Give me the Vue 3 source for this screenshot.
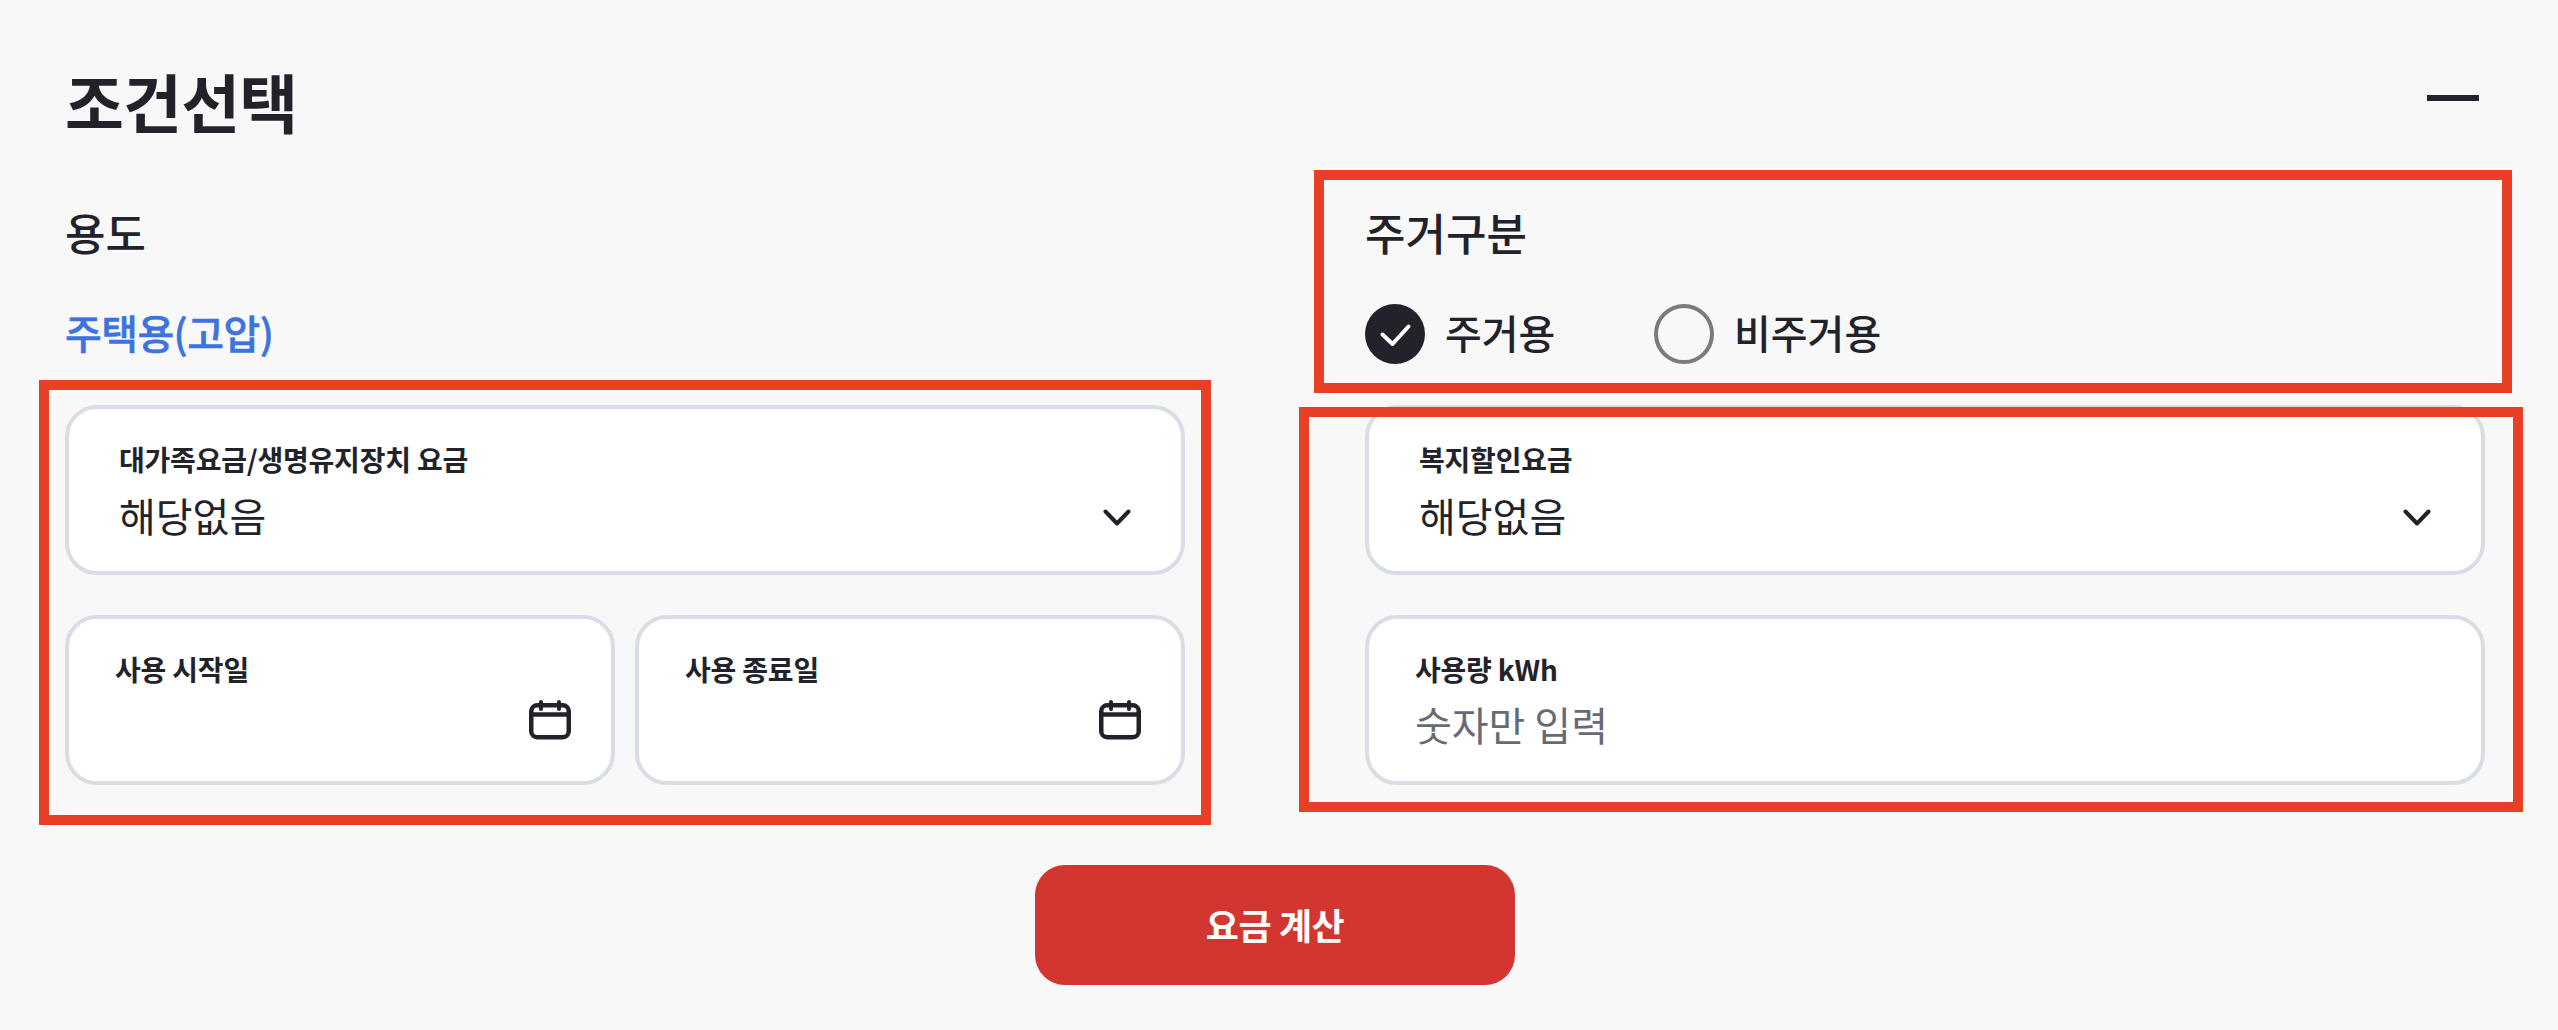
<script setup>
const selects = { family: '대가족요금/생명유지장치 요금', welfare: '복지할인요금' }
</script>

<template>
  <div class="page">
    <header class="head">
      <h1 class="title">조건선택</h1>
      <span class="minus"></span>
    </header>

    <div class="cols">
      <section class="col">
        <h2 class="sub">용도</h2>
        <div class="usage">주택용(고압)</div>
        <div class="card select">
          <label class="lbl">{{ selects.family }}</label>
          <div class="row">
            <span class="val">해당없음</span>
            <svg class="chev" width="28" height="17" viewBox="0 0 28 17"><path d="M2.5 2.5 14 14.5 25.5 2.5" fill="none" stroke="#22232a" stroke-width="4" stroke-linecap="round" stroke-linejoin="round"/></svg>
          </div>
        </div>
        <div class="dates">
          <div class="card date">
            <label class="lbl">사용 시작일</label>
            <div class="cal-row">
              <svg class="cal" width="42" height="42" viewBox="0 0 42 42"><g fill="none" stroke="#22232a" stroke-width="4.5"><rect x="2.25" y="6.25" width="37.5" height="32" rx="6"/><path d="M2.25 15.5h37.5"/><path d="M12 3v7M30 3v7" stroke-width="4" stroke-linecap="round"/></g></svg>
            </div>
          </div>
          <div class="card date">
            <label class="lbl">사용 종료일</label>
            <div class="cal-row">
              <svg class="cal" width="42" height="42" viewBox="0 0 42 42"><g fill="none" stroke="#22232a" stroke-width="4.5"><rect x="2.25" y="6.25" width="37.5" height="32" rx="6"/><path d="M2.25 15.5h37.5"/><path d="M12 3v7M30 3v7" stroke-width="4" stroke-linecap="round"/></g></svg>
            </div>
          </div>
        </div>
      </section>

      <section class="col">
        <h2 class="sub">주거구분</h2>
        <div class="radios">
          <div class="radio">
            <span class="dot on">
              <svg width="60" height="60" viewBox="0 0 60 60"><path d="M17.5 30.5 27.5 40 43.5 22.5" fill="none" stroke="#fff" stroke-width="4" stroke-linecap="round" stroke-linejoin="round"/></svg>
            </span>
            <span class="rlabel">주거용</span>
          </div>
          <div class="radio">
            <span class="dot"></span>
            <span class="rlabel">비주거용</span>
          </div>
        </div>
        <div class="card select">
          <label class="lbl">{{ selects.welfare }}</label>
          <div class="row">
            <span class="val">해당없음</span>
            <svg class="chev" width="28" height="17" viewBox="0 0 28 17"><path d="M2.5 2.5 14 14.5 25.5 2.5" fill="none" stroke="#22232a" stroke-width="4" stroke-linecap="round" stroke-linejoin="round"/></svg>
          </div>
        </div>
        <div class="card date">
          <label class="lbl">사용량 kWh</label>
          <div class="val placeholder">숫자만 입력</div>
        </div>
      </section>
    </div>

    <div class="actions">
      <button class="calc" type="button">요금 계산</button>
    </div>

    <i class="mark m1"></i>
    <i class="mark m2"></i>
    <i class="mark m3"></i>
  </div>
</template>

<style>
html, body { margin: 0; background: #f8f8f8; }
</style>

<style scoped>
.page {
  position: relative;
  box-sizing: border-box;
  width: 2558px;
  height: 1030px;
  padding: 60px 73px 0 65px;
  background: #f8f8f8;
  color: #22232a;
  font-family: "Noto Sans CJK KR", "Noto Sans", sans-serif;
}
.head {
  display: flex;
  justify-content: space-between;
  align-items: flex-start;
  height: 90px;
  margin-bottom: 54px;
}
.title {
  margin: 0;
  font-size: 64px;
  line-height: 80px;
  font-weight: 700;
  letter-spacing: -0.8px;
}
.minus {
  width: 52px;
  height: 6px;
  margin: 35px 6px 0 0;
  background: #22232a;
}
.cols {
  display: grid;
  grid-template-columns: 1120px 1120px;
  column-gap: 180px;
}
.col { display: flex; flex-direction: column; }
.sub {
  margin: 0 0 44px;
  font-size: 44px;
  line-height: 56px;
  font-weight: 500;
}
.usage {
  height: 60px;
  margin-bottom: 41px;
  font-size: 40px;
  line-height: 56px;
  font-weight: 500;
  -webkit-text-stroke: 0.5px #3b73e0;
  letter-spacing: -0.6px;
  color: #3b73e0;
}
.radios {
  display: flex;
  gap: 60px;
  height: 60px;
  margin-bottom: 41px;
}
.radio { display: flex; align-items: center; gap: 20px; min-width: 229px; }
.dot {
  box-sizing: border-box;
  width: 60px;
  height: 60px;
  border: 4px solid #7b7b7b;
  border-radius: 50%;
}
.dot.on { border: 0; background: #22232a; }
.dot svg { display: block; }
.rlabel { font-size: 40px; line-height: 56px; margin-bottom: 4px; font-weight: 500; }
.card {
  box-sizing: border-box;
  height: 170px;
  border: 4px solid #d9dee6;
  border-radius: 32px;
  background: #fff;
  padding-top: 32px;
}
.select { padding-left: 50px; padding-right: 50px; margin-bottom: 40px; }
.date { padding-left: 46px; padding-right: 40px; }
.lbl {
  display: block;
  font-size: 28px;
  line-height: 36px;
  font-weight: 700;
  letter-spacing: -0.2px;
}
.row {
  display: flex;
  align-items: center;
  justify-content: space-between;
  margin-top: 10px;
}
.chev { margin-top: 4px; }
.val {
  font-size: 40px;
  line-height: 56px;
  font-weight: 400;
}
.placeholder { margin-top: 9px; color: #666b73; }
.dates { display: grid; grid-template-columns: 1fr 1fr; gap: 20px; }
.cal-row { display: flex; justify-content: flex-end; margin-top: 12px; }
.cal, .chev { display: block; }
.actions { display: flex; justify-content: center; margin-top: 80px; }
.calc {
  width: 480px;
  height: 120px;
  padding: 0 0 3px;
  border: 0;
  border-radius: 30px;
  background: #d33631;
  color: #fff;
  font-family: inherit;
  font-size: 36px;
  font-weight: 700;
  letter-spacing: -0.4px;
}
.mark {
  position: absolute;
  box-sizing: border-box;
  border: 10px solid #e94025;
  pointer-events: none;
}
.m1 { left: 39px; top: 380px; width: 1172px; height: 445px; }
.m2 { left: 1314px; top: 170px; width: 1198px; height: 223px; }
.m3 { left: 1299px; top: 407px; width: 1224px; height: 405px; }
</style>
